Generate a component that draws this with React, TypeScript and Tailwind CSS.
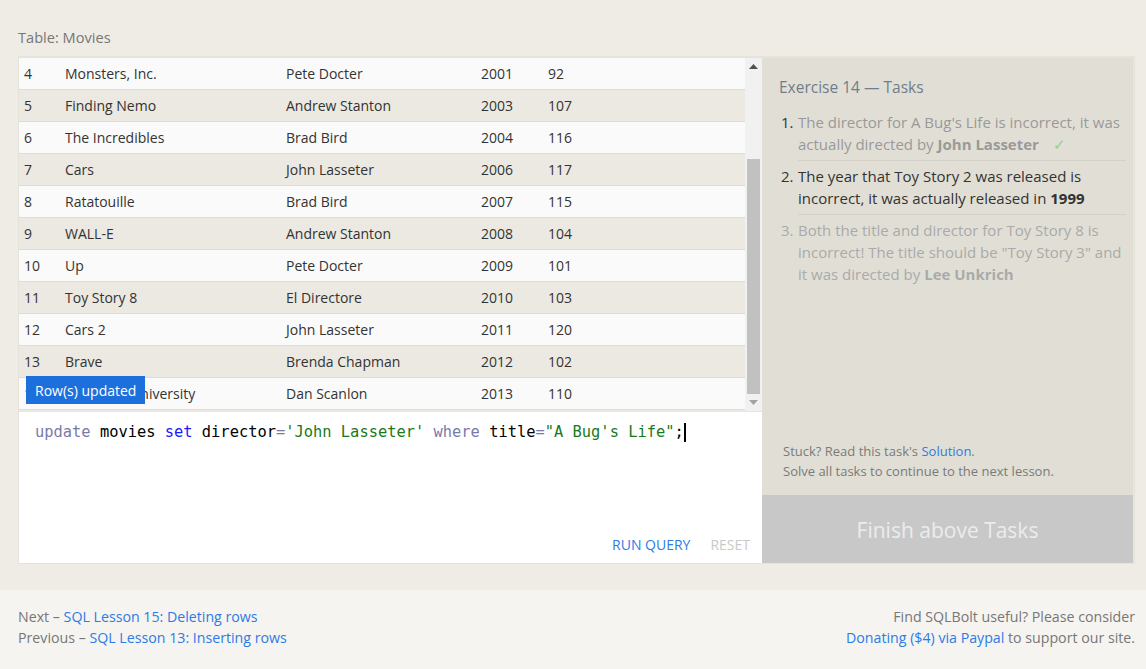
import React from 'react';

const movies = [
  { id: 4, title: 'Monsters, Inc.', director: 'Pete Docter', year: 2001, len: 92 },
  { id: 5, title: 'Finding Nemo', director: 'Andrew Stanton', year: 2003, len: 107 },
  { id: 6, title: 'The Incredibles', director: 'Brad Bird', year: 2004, len: 116 },
  { id: 7, title: 'Cars', director: 'John Lasseter', year: 2006, len: 117 },
  { id: 8, title: 'Ratatouille', director: 'Brad Bird', year: 2007, len: 115 },
  { id: 9, title: 'WALL-E', director: 'Andrew Stanton', year: 2008, len: 104 },
  { id: 10, title: 'Up', director: 'Pete Docter', year: 2009, len: 101 },
  { id: 11, title: 'Toy Story 8', director: 'El Directore', year: 2010, len: 103 },
  { id: 12, title: 'Cars 2', director: 'John Lasseter', year: 2011, len: 120 },
  { id: 13, title: 'Brave', director: 'Brenda Chapman', year: 2012, len: 102 },
  { id: 14, title: 'Monsters University', director: 'Dan Scanlon', year: 2013, len: 110 },
];

function MovieTable() {
  return (
    <div className="relative flex h-[353px] shrink-0">
      <div className="flex-1 flex flex-col">
        {movies.map((m, i) => (
          <div
            key={m.id}
            className={
              'flex items-center h-[32px] shrink-0 border-b border-[#dddcd5] text-[14px] text-[#333] ' +
              (i % 2 === 0 ? 'bg-[#fafafa]' : 'bg-[#ebe9e1]')
            }
          >
            <div className="w-[46px] pl-[5px]">{m.id}</div>
            <div className="w-[221px]">{m.title}</div>
            <div className="w-[195px]">{m.director}</div>
            <div className="w-[67px]">{m.year}</div>
            <div>{m.len}</div>
          </div>
        ))}
      </div>
      {/* scrollbar */}
      <div className="w-[17px] bg-[#f1f1f1] flex flex-col items-center">
        <div className="h-[17px] flex items-center justify-center">
          <svg width="9" height="5" viewBox="0 0 9 5"><path d="M0 5 L4.5 0 L9 5 Z" fill="#505050" /></svg>
        </div>
        <div className="h-[84px]" />
        <div className="w-[13px] h-[235px] bg-[#c1c1c1]" />
        <div className="flex-1 flex items-center justify-center">
          <svg width="9" height="5" viewBox="0 0 9 5"><path d="M0 0 L9 0 L4.5 5 Z" fill="#a3a3a3" /></svg>
        </div>
      </div>
      <div className="absolute left-[7px] top-[318px] h-[28px] px-[9px] flex items-center bg-[#1d6fdc] text-white text-[14px]">
        Row(s) updated
      </div>
    </div>
  );
}

function Editor() {
  return (
    <div className="flex-1 bg-white flex flex-col border-t border-[#e6e4dd]">
      <div className="pl-[16px] pt-[9px] font-['DejaVu_Sans_Mono',monospace] text-[15.4px] leading-[22px] whitespace-pre flex items-center">
        <span className="text-[#7a7aa8]">update</span>
        <span className="text-black"> movies </span>
        <span className="text-[#1a1aff]">set</span>
        <span className="text-black"> director</span>
        <span className="text-[#7a7aa8]">=</span>
        <span className="text-[#1a7a1a]">'John Lasseter'</span>
        <span className="text-black"> </span>
        <span className="text-[#7a7aa8]">where</span>
        <span className="text-black"> title</span>
        <span className="text-[#7a7aa8]">=</span>
        <span className="text-[#1a7a1a]">"A Bug's Life"</span>
        <span className="text-black">;</span>
        <span className="inline-block w-[2px] h-[19px] bg-black" />
      </div>
      <div className="flex-1" />
      <div className="flex justify-end items-center gap-[20px] pr-[12px] pb-[8px] text-[14px]">
        <span className="text-[#2d7be6]">RUN QUERY</span>
        <span className="text-[#c9c9c9]">RESET</span>
      </div>
    </div>
  );
}

function Tasks() {
  return (
    <div className="flex-1 bg-[#e1dfd5] flex flex-col border-r border-[#e8e6de]">
      <div className="pl-[17px] pr-[7px] pt-[18px] flex-1">
        <div className="text-[15.5px] leading-[22px] text-[#6f7d8c]">Exercise 14 — Tasks</div>
        <ol className="mt-[13px] pl-[19px] text-[15px] leading-[22px]">
          <li className="flex border-b border-[#d4d2c8] pb-[5px]">
            <span className="w-[17px] -ml-[17px] text-[#333] shrink-0">1.</span>
            <span className="text-[#999]">
              The director for A Bug's Life is incorrect, it was actually directed by{' '}
              <b className="font-bold">John Lasseter</b>
              <span className="ml-[14px] text-[#92d092]">✓</span>
            </span>
          </li>
          <li className="flex border-b border-[#d4d2c8] pt-[4px] pb-[5px]">
            <span className="w-[17px] -ml-[17px] text-[#333] shrink-0">2.</span>
            <span className="text-[#333]">
              The year that Toy Story 2 was released is incorrect, it was actually released in{' '}
              <b className="font-bold">1999</b>
            </span>
          </li>
          <li className="flex pt-[4px]">
            <span className="w-[17px] -ml-[17px] text-[#aaa] shrink-0">3.</span>
            <span className="text-[#aaa]">
              Both the title and director for Toy Story 8 is incorrect! The title should be "Toy Story 3" and
              it was directed by <b className="font-bold">Lee Unkrich</b>
            </span>
          </li>
        </ol>
      </div>
      <div className="px-[21px] pb-[14px] text-[13px] leading-[20px] text-[#7a7a7a]">
        <div>
          Stuck? Read this task's <span className="text-[#2d7be6]">Solution</span>.
        </div>
        <div>Solve all tasks to continue to the next lesson.</div>
      </div>
      <div className="h-[68px] pt-[3px] bg-[#c8c8c8] flex items-center justify-center text-[21px] text-[#ececec]">
        Finish above Tasks
      </div>
    </div>
  );
}

export default function App() {
  return (
    <div className="min-h-screen bg-[#efece5] font-['Open_Sans',sans-serif] flex flex-col">
      <div className="pl-[18px] pt-[27px]">
        <div className="text-[14.6px] text-[#777] leading-[20px]">Table: Movies</div>
        <div className="mt-[9px] w-[1117px] h-[508px] flex border border-[#e6e3db] border-t-2">
          <div className="w-[743px] flex flex-col">
            <MovieTable />
            <Editor />
          </div>
          <Tasks />
        </div>
      </div>
      <div className="mt-[26px] flex-1 bg-[#f5f4f0] flex justify-between pr-[11px] pl-[18px] pt-[16px] text-[14.2px] leading-[21px] text-[#777]">
        <div>
          <div>
            Next – <span className="text-[#2d7be6]">SQL Lesson 15: Deleting rows</span>
          </div>
          <div>
            Previous – <span className="text-[#2d7be6]">SQL Lesson 13: Inserting rows</span>
          </div>
        </div>
        <div className="text-right">
          <div>Find SQLBolt useful? Please consider</div>
          <div>
            <span className="text-[#2d7be6]">Donating ($4) via Paypal</span> to support our site.
          </div>
        </div>
      </div>
    </div>
  );
}
